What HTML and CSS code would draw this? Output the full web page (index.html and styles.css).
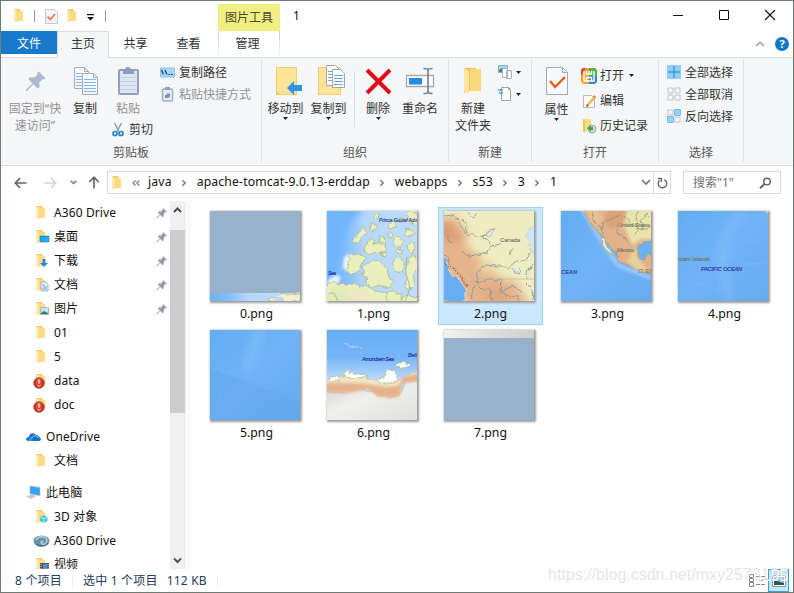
FILE: index.html
```html
<!DOCTYPE html>
<html lang="zh-CN">
<head>
<meta charset="utf-8">
<title>1</title>
<link rel="stylesheet" href="styles.css">
</head>
<body>
<svg class="defs" aria-hidden="true">
  <defs>
    <linearGradient id="sky" x1="0" x2="1" y1="0" y2="1"><stop offset="0" stop-color="#0fa0f5"/><stop offset="1" stop-color="#35b6ff"/></linearGradient>
    <linearGradient id="sea" x1="0" x2="1" y1="0" y2="1"><stop offset="0" stop-color="#64adf3"/><stop offset=".5" stop-color="#70b3f7"/><stop offset="1" stop-color="#66abf0"/></linearGradient>
    <linearGradient id="seawest" x1="0" x2="1"><stop offset="0" stop-color="#6cb3f9"/><stop offset=".22" stop-color="#85bffa"/><stop offset=".42" stop-color="#b5d8fb"/><stop offset="1" stop-color="#bfddfc"/></linearGradient>
    <linearGradient id="seasouth" x1="0" x2="0" y1="0" y2="1"><stop offset="0" stop-color="#66adf3"/><stop offset=".3" stop-color="#76b5f7"/><stop offset=".55" stop-color="#b9dbfc"/></linearGradient>
    <linearGradient id="ice" x1="0" x2="1" y1="0" y2="1"><stop offset="0" stop-color="#d0d0ce"/><stop offset=".4" stop-color="#f0f0ee"/><stop offset="1" stop-color="#dcdcda"/></linearGradient>
    <linearGradient id="icebar" x1="0" x2="1"><stop offset="0" stop-color="#f2f2f1"/><stop offset=".5" stop-color="#dededc"/><stop offset="1" stop-color="#cfcfcd"/></linearGradient>
    <filter id="rough" x="-5%" y="-5%" width="110%" height="110%"><feTurbulence type="fractalNoise" baseFrequency=".18" numOctaves="3" seed="4"/><feDisplacementMap in="SourceGraphic" scale="5" xChannelSelector="R" yChannelSelector="G"/></filter>
    <filter id="soft" x="-30%" y="-30%" width="160%" height="160%"><feGaussianBlur stdDeviation="4"/></filter>
    <filter id="soft2" x="-30%" y="-30%" width="160%" height="160%"><feGaussianBlur stdDeviation="1.6"/></filter>
    <symbol id="folder" viewBox="0 0 16 16"><path d="M1 1h6.500v2H10v10H4.500L3 14.500 1 13z" fill="#f3cc68"/><path d="M3.500 3H10v10H3.500z" fill="#fbdc83"/><path d="M1 1l2.500 2v11.500L1 13z" fill="#fdeab3"/></symbol>
    <symbol id="pin" viewBox="0 0 12 12"><path d="M7.800.3l3.900 3.900-.8.7-1-.2-1.700 1.800.2 2.500-1.200 1-2.400-2.400L1 11.600l-.7-.7 4-3.800-2.400-2.400 1-1.200 2.500.2L7.200 2 7 1z"/></symbol>
    <symbol id="caret" viewBox="0 0 5 3"><path d="M0 0h5L2.500 3z"/></symbol>
    <symbol id="crumb" viewBox="0 0 6 8"><path d="M1.300 1.200L4.200 4 1.300 6.800" fill="none" stroke="#777" stroke-width="1.500"/></symbol>
    <symbol id="alert" viewBox="0 0 12 12"><circle cx="6" cy="6" r="5.300" fill="#cf3422" stroke="#aa2c1e" stroke-width=".7"/><path d="M4.500 2.500Q3 6 4.800 9.500M7.500 2.500Q9 6 7.200 9.500" fill="none" stroke="#ec9a86" stroke-width=".6"/><path d="M5.200 2.200h1.600L6.500 7h-1zM5.400 8h1.200v1.600H5.400z" fill="#fff"/></symbol>
  </defs>
</svg>
<div class="window">
  <header class="titlebar">
    <div class="quick">
      <svg class="q-folder" width="16" height="16"><use href="#folder"/></svg>
      <i class="bar"></i>
      <svg class="q-check" width="13" height="15" viewBox="0 0 13 15"><path d="M.5.5h9l3 3v11H.5z" fill="#f4f4f5" stroke="#c4c8cc"/><path d="M2.500 7.500l2.700 3L10 5" fill="none" stroke="#f07850" stroke-width="1.800"/></svg>
      <svg class="q-folder2" width="16" height="16"><use href="#folder"/></svg>
      <svg class="q-more" width="7" height="7" viewBox="0 0 7 7"><path d="M0 0h7v1.300H0zM0 3h7L3.500 6.500z" fill="#111"/></svg>
      <i class="bar"></i>
    </div>
    <div class="tool-tab">图片工具</div>
    <div class="title">1</div>
    <div class="controls">
      <svg width="12" height="12" viewBox="0 0 12 12"><path d="M1 6.500h10" stroke="#111"/></svg>
      <svg width="12" height="12" viewBox="0 0 12 12"><path d="M1.500 1.500h9v9h-9z" fill="none" stroke="#111"/></svg>
      <svg width="12" height="12" viewBox="0 0 12 12"><path d="M1 1l10 10M11 1L1 11" stroke="#111" stroke-width="1.100"/></svg>
    </div>
  </header>
  <nav class="tabs">
    <span class="tab file">文件</span><span class="tab home">主页</span><span class="tab">共享</span><span class="tab">查看</span><span class="tab manage">管理</span>
    <svg class="collapse" width="10" height="6" viewBox="0 0 10 6"><path d="M1 5l4-3.800L9 5" fill="none" stroke="#999" stroke-width="1.300"/></svg>
    <span class="help">?</span>
  </nav>
  <section class="ribbon">
    <div class="group clip">
      <div class="tools">
        <button class="big off pinbtn"><svg width="32" height="32" viewBox="0 0 32 32"><use href="#pin" x="6" y="5" width="21" height="21" fill="#a3b4cd"/></svg><span>固定到“快<br>速访问”</span></button>
        <button class="big"><svg width="32" height="32" viewBox="0 0 32 32"><g fill="#f5f9fd" stroke="#a8aaac"><path d="M5.500 1.500h10l4 4v17h-14z"/><path d="M13.500 7.500h11l4 4v17h-15z"/></g><path d="M7 7.500h6M7 10.500h6M7 13.500h6M7 16.500h6M7 19.500h6M15 13.500h12M15 16.500h12M15 19.500h12M15 22.500h12M15 25.500h12" stroke="#86b4e8"/><path d="M15.500 1.500v4h4M24.500 7.500v4h4" fill="none" stroke="#a8aaac"/></svg><span>复制</span></button>
        <div class="pastecol">
          <button class="big off"><svg width="32" height="32" viewBox="0 0 32 32"><rect x="7" y="4" width="19" height="24" rx="1" fill="#dae5f4" stroke="#8295bd" stroke-width="2"/><path d="M11 4h2c0-4 6-4 6 0h3v4H11z" fill="#7f91af"/><path d="M8 11.500h17M8 15.500h17M8 19.500h17M8 23.500h17" stroke="#bfcfe6"/></svg><span>粘贴</span></button>
          <button class="row"><svg width="12" height="15" viewBox="0 0 12 15"><path d="M2.500 1l4.500 8.500M9.500 1L5 9.500" stroke="#8c9aa5" stroke-width="1.400"/><g fill="none" stroke="#2586cb" stroke-width="1.700"><circle cx="3" cy="11.500" r="2"/><circle cx="9" cy="11.500" r="2"/></g></svg>剪切</button>
        </div>
        <div class="rows first">
          <button class="row"><svg width="15" height="11" viewBox="0 0 15 11"><path d="M.5 1h14v9H.5z" fill="#a7dafa" stroke="#8ac3e8"/><path d="M1.500 3l2 4.500M5 3l2 4.500M8.500 7.500h1.700M11 7.500h1.700" stroke="#173b5c" stroke-width="1.200"/></svg>复制路径</button>
          <button class="row off"><svg width="15" height="15" viewBox="0 0 15 15"><rect x="2.500" y="2" width="10" height="12" rx="1" fill="#e5edf9" stroke="#92a5c6" stroke-width="1.500"/><path d="M5 0h5v3H5z" fill="#7f91af"/><path d="M5 11V8h2L6 6.500h4v4L8.700 9.300V11z" fill="#647fa9"/></svg>粘贴快捷方式</button>
        </div>
      </div>
      <div class="caption">剪贴板</div>
    </div>
    <div class="group org">
      <div class="tools">
        <button class="big"><svg width="32" height="32" viewBox="0 0 32 32"><path d="M6.500 1.500h20v27h-20z" fill="#ffe397" stroke="#ebce71"/><path d="M6 25l4 4H6z" fill="#ecc659"/><path d="M17 22l7-7v4h8v6h-8v4z" fill="#2d93e6"/></svg><span>移动到</span><svg class="caret" width="5" height="3"><use href="#caret"/></svg></button>
        <button class="big"><svg width="32" height="32" viewBox="0 0 32 32"><path d="M5.500 1.500h22v27h-22z" fill="#ffe397" stroke="#ebce71"/><path d="M13.500-.5h9l3 3v17h-12z" fill="#fff" stroke="#a2a7ac"/><path d="M19.500 3.500h8l4 4v14h-12z" fill="#fff" stroke="#a2a7ac"/><path d="M21 9.500h9M21 12.500h9M21 15.500h9M21 18.500h9M15 5.500h4M15 8.500h4M15 11.500h4M15 14.500h4" stroke="#72a4de"/></svg><span>复制到</span><svg class="caret" width="5" height="3"><use href="#caret"/></svg></button>
        <i class="rule"></i>
        <button class="big del"><svg width="32" height="32" viewBox="0 0 32 32"><path d="M5 4l23 23M28 4L5 27" stroke="#e00d16" stroke-width="4"/></svg><span>删除</span><svg class="caret" width="5" height="3"><use href="#caret"/></svg></button>
        <button class="big ren"><svg width="32" height="32" viewBox="0 0 32 32"><path d="M2.500 9.500h27v11h-27z" fill="#fff" stroke="#a6aaad" stroke-width="1.300"/><path d="M5 12h13v6.500H5z" fill="#238ce2"/><path d="M19.500 2.500c3 0 4.500 0 4.500 2 0-2 2-2 4.500-2M24 4v23M19.500 27.500c3 0 4.500 0 4.500-2 0 2 2 2 4.500 2" fill="none" stroke="#808588" stroke-width="1.700"/></svg><span>重命名</span></button>
      </div>
      <div class="caption">组织</div>
    </div>
    <div class="group new">
      <div class="tools">
        <button class="big"><svg width="32" height="32" viewBox="0 0 32 32"><path d="M7 2h12v3h5v20H12l-5 2z" fill="#edc459"/><path d="M13 3h11v22H13z" fill="#f8da7c"/><path d="M7 2l5 3v23l-5-3z" fill="#ffe5a0"/></svg><span>新建<br>文件夹</span></button>
        <div class="rows icons">
          <button class="row"><svg width="15" height="15" viewBox="0 0 15 15"><path d="M.5.500h9v7h-9z" fill="#a9d6f5" stroke="#8eaec4"/><path d="M1 5l3-2 5 3v1H1z" fill="#48815e"/><path d="M4.500 3.500h5v9h-5zM8.500 5.500h5v8h-5z" fill="#fff" stroke="#a9b4bd"/></svg><svg class="caret" width="5" height="3"><use href="#caret"/></svg></button>
          <button class="row"><svg width="15" height="15" viewBox="0 0 15 15"><path d="M3.500.5h7l2 2v11h-9z" fill="#fff" stroke="#9ba0a4"/><path d="M0 3h5M1 6h4" stroke="#4a9be0" stroke-width="1.500"/><path d="M10.500.500v2h2" fill="none" stroke="#9ba0a4"/></svg><svg class="caret" width="5" height="3"><use href="#caret"/></svg></button>
        </div>
      </div>
      <div class="caption">新建</div>
    </div>
    <div class="group open">
      <div class="tools">
        <button class="big"><svg width="32" height="32" viewBox="0 0 32 32"><path d="M5.500 1.500h16l5 5v22h-21z" fill="#f8f9fc" stroke="#a4a8ac"/><path d="M21.500 1.500v5h5" fill="none" stroke="#a4a8ac"/><path d="M9 15l5 6 10-10" fill="none" stroke="#ef5b20" stroke-width="2.400"/></svg><span>属性</span><svg class="caret" width="5" height="3"><use href="#caret"/></svg></button>
        <div class="rows three">
          <button class="row"><svg width="16" height="16" viewBox="0 0 16 16"><path d="M0 2l2-2h6v16H2l-2-2z" fill="#f1a32a"/><path d="M8 0h6l2 2v6H8z" fill="#53b348"/><path d="M0 2l2-2h3L0 8z" fill="#dd4239"/><path d="M8 8h8v6l-2 2H8z" fill="#318ad0"/><path d="M3 3v10h10V3M5.500 3v3h5V3M8 3v3M5.500 13V9.500h5V13" fill="none" stroke="#fff" stroke-width="1.400"/></svg>打开<svg class="caret" width="5" height="3"><use href="#caret"/></svg></button>
          <button class="row"><svg width="16" height="16" viewBox="0 0 16 16"><path d="M2.500 2.500h8l3 3v9h-11z" fill="#fafafa" stroke="#b9bcbe"/><path d="M5 14l1-3 7-8 2 2-7 7z" fill="#f0b748"/><path d="M5 14l1-3 2 2z" fill="#795b4f"/><path d="M12 4l1-2 2 2-1 1z" fill="#d97972"/></svg>编辑</button>
          <button class="row"><svg width="16" height="16" viewBox="0 0 16 16"><path d="M2 1h8v12H4l-2 1z" fill="#fbdc86"/><path d="M2 1l2 2v12l-2-2z" fill="#eec25a"/><circle cx="11" cy="11" r="4" fill="#d5d9dc" stroke="#a2aaaf"/><path d="M6 10l4-3v2h2v3h-2v2z" fill="#43a64a"/></svg>历史记录</button>
        </div>
      </div>
      <div class="caption">打开</div>
    </div>
    <div class="group select">
      <div class="tools">
        <div class="rows">
          <button class="row"><svg width="14" height="14" viewBox="0 0 14 14"><path d="M0 0h14v14H0z" fill="#8fcef9"/><path d="M7 1v12M1 7h12" stroke="#3e98dc" stroke-width="1.300"/></svg>全部选择</button>
          <button class="row"><svg width="14" height="14" viewBox="0 0 14 14"><path d="M1 1h5v5H1zM8 1h5v5H8zM1 8h5v5H1zM8 8h5v5H8z" fill="#f7f7f7" stroke="#c2c5c7"/></svg>全部取消</button>
          <button class="row"><svg width="14" height="14" viewBox="0 0 14 14"><path d="M1 1h5v5H1zM8 8h5v5H8z" fill="#f7f7f7" stroke="#c2c5c7"/><path d="M7.500.500h6v6h-6zM.5 7.500h6v6h-6z" fill="#99d2fb" stroke="#77bcee"/></svg>反向选择</button>
        </div>
      </div>
      <div class="caption">选择</div>
    </div>
  </section>
  <div class="navigation">
    <svg class="arrow back" width="13" height="12" viewBox="0 0 13 12"><path d="M12.500 6H1.500M6 1.200L1.300 6 6 10.800" fill="none" stroke="#666" stroke-width="1.700"/></svg>
    <svg class="arrow forward" width="13" height="12" viewBox="0 0 13 12"><path d="M.5 6h11M7 1.200L11.700 6 7 10.800" fill="none" stroke="#d5d5d5" stroke-width="1.700"/></svg>
    <svg class="arrow recent" width="7" height="5" viewBox="0 0 7 5"><path d="M.7.800l2.800 2.800L6.300.8" fill="none" stroke="#777" stroke-width="1.400"/></svg>
    <svg class="arrow up" width="12" height="13" viewBox="0 0 12 13"><path d="M6 12.500v-11M1.200 6L6 1.300 10.800 6" fill="none" stroke="#666" stroke-width="1.700"/></svg>
    <div class="address">
      <svg class="addr-folder" width="16" height="16"><use href="#folder"/></svg>
      <svg class="dbl" width="8" height="6" viewBox="0 0 8 6"><path d="M3.500.500L1 3l2.500 2.500M7.300.500L4.800 3l2.500 2.500" fill="none" stroke="#777" stroke-width="1.200"/></svg>
      <span>java</span><svg class="sep" width="6" height="8"><use href="#crumb"/></svg><span>apache-tomcat-9.0.13-erddap</span><svg class="sep" width="6" height="8"><use href="#crumb"/></svg><span>webapps</span><svg class="sep" width="6" height="8"><use href="#crumb"/></svg><span>s53</span><svg class="sep" width="6" height="8"><use href="#crumb"/></svg><span>3</span><svg class="sep" width="6" height="8"><use href="#crumb"/></svg><span>1</span>
      <svg class="drop" width="10" height="7" viewBox="0 0 10 7"><path d="M1 1l4 4 4-4" fill="none" stroke="#707070" stroke-width="1.600"/></svg>
      <div class="refresh"><svg width="11" height="12" viewBox="0 0 11 12"><path d="M7.200 2.600A4.300 4.300 0 1 1 2.600 3.300M.8 1.500h3.600v3.800" fill="none" stroke="#6c6c6c" stroke-width="1.500"/></svg></div>
    </div>
    <div class="search"><span>搜索"1"</span><svg width="13" height="12" viewBox="0 0 13 12"><circle cx="8" cy="4.500" r="3.300" fill="none" stroke="#666" stroke-width="1.500"/><path d="M5.500 7L1 11.300" stroke="#666" stroke-width="2"/></svg></div>
  </div>
  <main class="body">
    <aside class="tree">
      <div class="item"><svg class="ico" viewBox="0 0 16 16"><use href="#folder"/></svg><span>A360 Drive</span><svg class="pin"><use href="#pin"/></svg></div>
      <div class="item"><svg class="ico" viewBox="0 0 16 16"><use href="#folder"/><path d="M5 7h9v6H5z" fill="url(#sky)" stroke="#1378bd" stroke-width=".6"/></svg><span>桌面</span><svg class="pin"><use href="#pin"/></svg></div>
      <div class="item"><svg class="ico" viewBox="0 0 16 16"><use href="#folder"/><path d="M7.500 6h3v4H13l-4 4-4-4h2.500z" fill="#278bd6"/></svg><span>下载</span><svg class="pin"><use href="#pin"/></svg></div>
      <div class="item"><svg class="ico" viewBox="0 0 16 16"><use href="#folder"/><path d="M6 5h5l2 2v7H6z" fill="#f1f5f8" stroke="#a5b1b9"/><path d="M7 8h3M8 10h4M7 12h5" stroke="#61a4d5"/></svg><span>文档</span><svg class="pin"><use href="#pin"/></svg></div>
      <div class="item"><svg class="ico" viewBox="0 0 16 16"><use href="#folder"/><path d="M5.500 6.500h8v7h-8z" fill="#c5e5fa" stroke="#a7b4ba"/><path d="M6 12l3-2 4 2v1H6z" fill="#3f7b72"/></svg><span>图片</span><svg class="pin"><use href="#pin"/></svg></div>
      <div class="item"><svg class="ico" viewBox="0 0 16 16"><use href="#folder"/></svg><span>01</span></div>
      <div class="item"><svg class="ico" viewBox="0 0 16 16"><use href="#folder"/></svg><span>5</span></div>
      <div class="item"><svg class="ico" viewBox="0 0 16 16"><use href="#folder"/><use href="#alert" x="-2" y="4" width="12" height="12"/></svg><span>data</span></div>
      <div class="item"><svg class="ico" viewBox="0 0 16 16"><use href="#folder"/><use href="#alert" x="-2" y="4" width="12" height="12"/></svg><span>doc</span></div>
      <div class="item root"><svg class="ico" viewBox="0 0 16 16"><path d="M3 12C-1 12-.5 8 3 8c0-4 5-5 7-2 2-.5 3 1 3 2 3 1 2 4 0 4z" fill="#0c75cc"/><path d="M5 12c-2-1-1-3 1-3 1-3 5-3 6 0" fill="none" stroke="#fff" stroke-width=".6"/></svg><span>OneDrive</span></div>
      <div class="item"><svg class="ico" viewBox="0 0 16 16"><use href="#folder"/></svg><span>文档</span></div>
      <div class="item root"><svg class="ico" viewBox="0 0 16 16"><path d="M4 1l10 1.500v8L4 9z" fill="#34a4ee" stroke="#a7b9c6" stroke-width=".7"/><path d="M0 11.500l6-2 5 1.500-6 3z" fill="#c5cacd"/></svg><span>此电脑</span></div>
      <div class="item"><svg class="ico" viewBox="0 0 16 16"><use href="#folder"/><path d="M5 8l4-2 3.500 2v4L9 14l-4-2z" fill="#42c5de"/><path d="M5 8l4 1.500L12.500 8M9 9.500V14" fill="none" stroke="#b7edf6"/></svg><span>3D 对象</span></div>
      <div class="item"><svg class="ico" viewBox="0 0 16 16"><ellipse cx="6.500" cy="8" rx="8" ry="5.500" fill="#6a93a8"/><path d="M1 7c3-5 11-4 11 1 0 4-6 4-6 1.500 0-1 1.500-1.500 2.500-.5" fill="none" stroke="#b5ced9" stroke-width="1.400"/><path d="M1 11c3 3 9 3 12-1" fill="none" stroke="#3f6a80" stroke-width="1.200"/></svg><span>A360 Drive</span></div>
      <div class="item"><svg class="ico" viewBox="0 0 16 16"><use href="#folder"/><path d="M5 6h9v9H5z" fill="#4c5460"/><path d="M8 7h4v7H8z" fill="#568fc1"/><path d="M6 7v8M13 7v8" stroke="#d5d8dd" stroke-dasharray="1 1"/></svg><span>视频</span></div>
    </aside>
    <div class="scrollbar">
      <svg width="16" height="29" viewBox="0 0 16 29"><path d="M4 11L7.500 7.500 11 11" fill="none" stroke="#505050" stroke-width="2"/></svg>
      <div class="thumb"></div>
      <svg class="down" width="16" height="17" viewBox="0 0 16 17"><path d="M4 6.500L7.500 10 11 6.500" fill="none" stroke="#505050" stroke-width="2"/></svg>
    </div>
    <section class="files">
      <figure><svg class="map" viewBox="0 0 90 90"><path d="M0 0h90v90H0z" fill="#99b2cc"/><path d="M0 82h90v8H0z" fill="url(#seawest)"/><g filter="url(#rough)"><path d="M59 88l5-2 3 5h-8zM70 82l5 2 5-1 10-1v11l-7-3-7 2-4-5-5-2z" fill="#f0efd0" stroke="#b8b58c" stroke-width=".7"/></g></svg><figcaption>0.png</figcaption></figure>
      <figure><svg class="map" viewBox="0 0 90 90"><path d="M0 0h90v90H0z" fill="url(#seawest)"/><path d="M-5-5h45Q17 12 14 36T-5 68z" fill="#6fb6fb" filter="url(#soft)"/><path d="M17 46l5-3 4 11-5 7-5-4zM1 69l7-5 6 2-4 9H0z" fill="#edf5ff" filter="url(#soft2)"/><g filter="url(#rough)" fill="#e9efbd" stroke="#b3b17c" stroke-width=".7"><path d="M-3 78l7-7 8 2 8 1 6-3 7 5 7-1 8 5 10 1 7 5 9 1 7-3 13 3v10H-5z"/><path d="M22 45l10-2 7 4-5 6-2 6-8 5-4-4 2-8zM35 56l6-4 11-3 8 10 2 7 5 5-5 6-10-2-6 2-9-7 4-2-6-5 3-2z"/><path d="M26 28l5-6 7-5 2 5-5 5-3 4-6 0zM37 36l4-5 2-4 5 2-1 4 8-2 4 6-4 5-5-1-6 2-6-2zM52 25l5 1 1 6-4 2-2-4zM68 47l6-1 2 7-2 9-6-2-2-7zM82 46l6-2 4 10-5 8v12l-5 5-5-3 3-10-2-7zM67 27l5-2 4 6-3 6-6-2zM80 34l5-3 3 5-2 7-5-3zM43 14l5-2 3 5-7 3zM47 3l6 0-1 5-5-1zM62 13l5-3 3 5-7 3zM80 3l5-3 8 7-3 8-8-5zM61 22l3-1 1 4-4 1zM78 17l8 2 3 5-7 2-4-4zM53 42l6 1-2 3zM60 81l6-1 8 4v8H60zM70 38l6 1-2 4-5-2zM72 6l4 1-1 5-4-2z"/></g><path d="M-3 92V84l14-8 16 3 12 8v5z" fill="#d9eab0" opacity=".5" filter="url(#soft2)"/><path d="M18 82l18-5 8 10-12 6z" fill="#f3e6c6" opacity=".8" filter="url(#soft2)"/><path d="M2 83q4-3 6 1t3 6M80 46q-3 15 1 23t-3 21" fill="none" stroke="#7fa9a6" stroke-width=".7"/><g class="sea-label"><text x="52" y="11" textLength="38" lengthAdjust="spacingAndGlyphs">Prince Gustaf Ado</text><text x="1" y="64" textLength="8">Sea</text></g></svg><figcaption>1.png</figcaption></figure>
      <figure class="selected"><svg class="map" viewBox="0 0 90 90"><path d="M0 0h90v90H0z" fill="#f0ecc1"/><g filter="url(#soft)"><path d="M-8 8l20-2 12 16-2 14 14 8 4 14 18 10 14 2 14 26H24L-8 45z" fill="#e6b48c"/><path d="M-8 8l14 2 12 18-8 4L-8 24z" fill="#dc9d76"/><path d="M42 76l14-2 10 20H42z" fill="#e0a880"/><path d="M34 50l14 0 6 14-18-1z" fill="#ecd0a0"/></g><g filter="url(#rough)"><path d="M-5 40l7 8 3 12 11 10 6 8-1 5v8H-6z" fill="#68aef4" stroke="#e8d7be"/><path d="M94 15l-8 1-4 7 3 9 3 9 6 4z" fill="#cfe5fc" stroke="#c5c9a5" stroke-width=".7"/><path d="M1 44l6 11 8 8 8 12M0 50l6 8" stroke="#937e70" fill="none" stroke-width="1.300" stroke-dasharray="2 1"/><path d="M24 2l4 5 5-4M38 25l5-2 2-4 6-1-4 5-1 3-5-2zM69 56l3 7 4 1-1-8M66 41l2-3-2 6" fill="#deecf1" stroke="#8c8870" stroke-width=".6"/></g><g filter="url(#rough)" fill="none" stroke="#7f9c97" stroke-width=".85"><path d="M0 5l9-1 6 6 3 7 5 8 4-2 10 3 7 3 4 6 8-2M47 35l-3 6-9 2-4 1-6 2-9-6M35 59l7-5 9 1 6 0 7 3 8-7 11-2 3-7M35 59l-2 6 1 9 4 4 8 0 1 6 2 7M30 71l6 0 9-2 12 0M57 69l-1 12 7 3 10 1 4 7M57 80l12-5 11 7M90 54l-8 6 1 9M80 71l8 8 1 11M20 8l4 14M0 22l8 10M30 74l-3 14"/></g><path d="M33 68h57" stroke="#b9bca4" stroke-width=".7"/><g class="land-label"><text x="56" y="31" textLength="20">Canada</text></g></svg><figcaption>2.png</figcaption></figure>
      <figure><svg class="map" viewBox="0 0 90 90"><path d="M0 0h90v90H0z" fill="url(#sea)"/><path d="M20-4l20 33 17 25 33 13" fill="none" stroke="#9ccaff" stroke-width="4" filter="url(#soft2)"/><g filter="url(#rough)"><path d="M21-4h73v33l-13 2-5 5 1 8 4 6 4-2 1-5 7 1v19l-12-2-9-5-13-5-6-12-8-9-5-7-4-3-9-10z" fill="#e3b28b" stroke="#a59a7d" stroke-width=".7"/><path d="M39 25l4 3 3 8 6 5 1 3-7-4-4-6z" fill="#ece6c0" stroke="#a99e80" stroke-width=".7"/></g><g filter="url(#soft2)"><path d="M62-3h30v31H80l-8 6-8-16z" fill="#e9e4ac"/><path d="M47-3h19l-2 13-14 8-8-9z" fill="#dda27a"/><path d="M25-2h12l6 9-7 9z" fill="#e7c193"/><path d="M74 37l4 12 10 12-14-3-8-8z" fill="#e6d19c"/></g><g fill="none" stroke="#7f8f85" stroke-width=".7" filter="url(#rough)"><path d="M30-2l4 15 9 5M41 13l17-9M41 13l1 10M56 14v9l8 3 4 8M64 6l6 8 8 4 12-2M74 24l3-8-3-9 3-8M88 4l-8 4 2 8"/></g><g class="land-label"><text x="57" y="16" textLength="32">United States</text><text x="56" y="41" textLength="17">Mexico</text><text x="78" y="62" textLength="12">□ El</text></g><g class="sea-label"><text x="0" y="63" textLength="16">CEAN</text></g></svg><figcaption>3.png</figcaption></figure>
      <figure><svg class="map" viewBox="0 0 90 90"><path d="M0 0h90v90H0z" fill="url(#sea)"/><path d="M64 0L46 29l-2 25 7 36" fill="none" stroke="#8fc4fc" stroke-width="9" opacity=".5" filter="url(#soft)"/><path d="M12 72l13 2 19 5M38 45l19 3 14 6 16-2M6 8l9 5M63 27l20 7" fill="none" stroke="#8bc3fc" stroke-width=".6" opacity=".6" filter="url(#rough)"/><path d="M87 0h3v3z" fill="#d5d1a6"/><g class="land-label"><text x="0" y="50" textLength="32">tcairn Islands</text></g><g class="sea-label"><text x="23" y="60" textLength="41">PACIFIC OCEAN</text></g></svg><figcaption>4.png</figcaption></figure>
      <figure><svg class="map" viewBox="0 0 90 90"><path d="M0 0h90v90H0z" fill="url(#sea)"/><path d="M51-3L36 42" stroke="#8cc2fb" stroke-width="11" opacity=".55" filter="url(#soft)"/><path d="M-5 37l64 22 33 12v21H-5z" fill="#62a6e9" opacity=".45" filter="url(#soft2)"/><path d="M3 38l31 10 27 12M12 60l-3 5" fill="none" stroke="#80b9ef" stroke-width=".8" opacity=".6" filter="url(#rough)"/></svg><figcaption>5.png</figcaption></figure>
      <figure><svg class="map" viewBox="0 0 90 90"><path d="M0 0h90v90H0z" fill="url(#seasouth)"/><path d="M-5 56h30l15 6 35 1 5-12h15v45H-5z" fill="url(#ice)"/><g filter="url(#rough)"><path d="M-4 48l8 1 12-2 12-2 10 2 9 4 10 3 14-2 9-7 15-5v11l-20 1-3 14-9 1-16-3-7-5-20 2-10 1-14-2z" fill="#f0e6c8" stroke="#d0c98e" stroke-width=".7"/></g><g filter="url(#soft2)"><path d="M-4 53l28 0 15 1 20 3 12-1 5-9 18-4v8l-19 2-2 12-9 3-14-2-9-7-22 4-23-1z" fill="#e5b28d"/></g><g filter="url(#rough)" fill="#fcfdfd" stroke="#bab67c" stroke-width=".7"><path d="M16 43l4-3 4 4 10 0 6 2-7 2-16-1zM49 51l8-4 3-8 8 2 3 9-4 3-17 0zM69 34l8-2 8 3-7 3-9-1zM2 48l9-1 2 3-10 1z"/></g><path d="M17 13l8 4 5-1 7 4" fill="none" stroke="#aad3fc" filter="url(#rough)"/><g class="sea-label"><text x="35" y="31" textLength="32">Amundsen Sea</text><text x="81" y="27" textLength="9">Bell</text></g></svg><figcaption>6.png</figcaption></figure>
      <figure><svg class="map" viewBox="0 0 90 90"><path d="M0 0h90v90H0z" fill="#99b2cc"/><path d="M0 0h90v8H0z" fill="url(#icebar)"/></svg><figcaption>7.png</figcaption></figure>
    </section>
  </main>
  <footer class="status"><span>8 个项目</span><i></i><span class="chosen">选中 1 个项目</span><span class="size">112 KB</span><i></i>
    <div class="views"><svg width="17" height="13" viewBox="0 0 17 13"><path d="M.5.500h4v3h-4zM.5 4.500h4v3h-4zM.5 8.500h4v4h-4zM7 2.500h4M12 2.500h4M7 6.500h4M12 6.500h4M7 10.500h4M12 10.500h4" fill="none" stroke="#85868c"/></svg><div class="large"><svg width="14" height="12" viewBox="0 0 14 12"><path d="M.5.500h13v11H.5z" fill="#fff" stroke="#85999f"/><path d="M2 2h10v8H2z" fill="#9bc9ed"/><path d="M2 5l6 2 4 1v2H2z" fill="#31554d"/></svg></div></div>
  </footer>
  <div class="watermark">https://blog.csdn.net/mxy2573195</div>
</div>
</body>
</html>
```
FILE: styles.css
```css
* { box-sizing: border-box; }
body { margin: 0; font: 12px/17px "Noto Sans", "Noto Sans CJK SC", sans-serif; color: #111; }
svg { display: block; flex: none; overflow: visible; }
button { border: 0; background: none; padding: 0; margin: 0; font: inherit; color: #333; white-space: nowrap; }
.defs { position: absolute; width: 0; height: 0; }
.window { position: relative; width: 794px; height: 593px; border: 1px solid #6e7c74; background: #fff; overflow: hidden; display: flex; flex-direction: column; }
.titlebar { height: 30px; flex: none; display: flex; }
.quick { width: 217px; display: flex; align-items: center; padding-left: 12px; }
.bar { width: 1px; height: 12px; background: #999; }
.q-folder { margin-right: 5px; }
.q-check { margin-left: 10px; }
.q-folder2 { margin-left: 8px; }
.q-more { margin: 3px 11px 0 5px; }
.tool-tab { width: 62px; height: 27px; margin-top: 3px; background: #f1ee83; text-align: center; line-height: 27px; color: #494926; }
.title { padding: 6px 0 0 13px; }
.controls { margin-left: auto; display: flex; gap: 34px; padding: 8px 17px 0 0; }
.tabs { height: 27px; flex: none; display: flex; border-bottom: 1px solid #dadbdc; color: #333; }
.tab { width: 53px; text-align: center; line-height: 25px; }
.file { width: 56px; height: 23px; background: #1979ca; color: #fff; }
.home { width: 52px; height: 27px; border: 1px solid #dadbdc; border-bottom: 0; background: #f5f6f7; line-height: 23px; }
.manage { width: 62px; margin-left: 3px; padding-right: 3px; border: 1px solid; border-width: 0 1px; border-image: linear-gradient(#ccc, #fff) 1; }
.collapse { margin: 10px 0 0 auto; }
.help { width: 14px; height: 14px; margin: 6px 4px 0 10px; border-radius: 50%; background: #1177c7; color: #fff; font-size: 11px; font-weight: 700; line-height: 14px; text-align: center; }
.ribbon { height: 108px; flex: none; display: flex; background: #f5f6f7; border-bottom: 1px solid #dadbdc; }
.group { height: 102px; margin-top: 2px; border-right: 1px solid #e1e2e3; display: flex; flex-direction: column; }
.tools { display: flex; height: 85px; }
.caption { text-align: center; color: #555; line-height: 18px; }
.clip { width: 261px; } .org { width: 187px; } .new { width: 83px; } .open { width: 127px; } .select { width: 85px; }
.big { width: 43px; padding-top: 6px; display: flex; flex-direction: column; align-items: center; justify-content: flex-start; }
.big > span { margin-top: 2px; }
.big .caret { margin-top: 0; }
.caret { fill: #222; }
.off { color: #929292; }
.off > svg { opacity: .88; }
.clip .big { width: 32px; }
.clip .pinbtn { width: 68px; }
.pastecol { width: 56px; padding-left: 11px; }
.pastecol .row { height: 18px; gap: 5px; margin-top: 3px; }
.row { height: 22px; display: flex; align-items: center; gap: 4px; }
.rows { padding-top: 1px; }
.first { padding-left: 3px; }
.org .tools { padding-left: 2px; }
.rule { height: 56px; width: 1px; background: #dddedf; margin: 11px 2px 0 4px; }
.org .del { width: 42px; }
.org .ren { width: 42px; }
.new .big { width: 48px; }
.icons { padding-left: 1px; }
.icons .row { gap: 3px; }
.open .big { width: 49px; }
.open .big > span { margin-top: 3px; }
.three { padding-top: 3px; }
.three .row { height: 25px; gap: 3px; }
.three .caret { margin-left: 2px; }
.select .rows { padding-left: 8px; }
.navigation { height: 35px; flex: none; display: flex; align-items: flex-start; padding-top: 5px; }
.arrow { margin-top: 6px; }
.back { margin-left: 13px; } .forward { margin-left: 17px; } .recent { margin: 9px 0 0 13px; } .up { margin: 5px 0 0 11px; }
.address { width: 564px; height: 23px; margin-left: 7px; border: 1px solid #d9d9d9; display: flex; align-items: center; padding-left: 3px; letter-spacing: .16px; }
.dbl { margin: 0 8px 0 5px; }
.address span { line-height: 19px; height: 21px; white-space: nowrap; font-size: 12.2px; }
.sep { margin: 0 9.500px; }
.drop { margin-left: auto; margin-right: 2px; }
.refresh { width: 17px; height: 21px; border-left: 1px solid #d9d9d9; display: flex; align-items: center; justify-content: center; }
.search { width: 98px; height: 23px; margin-left: 12px; border: 1px solid #d9d9d9; display: flex; align-items: center; justify-content: space-between; padding: 0 8px 0 9px; color: #707070; }
.body { height: 368px; flex: none; display: flex; overflow: hidden; }
.tree { width: 169px; overflow: hidden; }
.item { height: 24px; display: flex; align-items: center; padding-left: 34px; }
.item span { white-space: nowrap; line-height: 17px; padding-bottom: 2px; letter-spacing: .1px; }
.ico { width: 16px; height: 16px; margin-right: 3px; }
.pin { width: 11px; height: 11px; margin: 0 3px 0 auto; fill: #929ca6; }
.root { margin-top: 8px; padding-left: 25px; }
.root .ico { margin-right: 4px; }
.scrollbar { width: 16px; background: #f0f0f0; display: flex; flex-direction: column; }
.thumb { width: 15px; height: 183px; background: #cdcdcd; }
.down { margin-top: auto; }
.files { flex: 1; margin-left: 2px; border-left: 1px solid #f2f2f2; padding: 6px 0 0 15px; display: grid; grid-template-columns: repeat(5, 105px); grid-auto-rows: 118px; gap: 1px 12px; align-content: start; }
figure { margin: 0; padding: 3px 0 0 6px; border: 1px solid transparent; border-left: 0; border-right: 0; display: flex; flex-direction: column; }
.selected { background: #cce8ff; border: 1px solid #99d1ff; padding-left: 5px; }
.map { width: 90px; height: 90px; overflow: hidden; box-shadow: 1px 1px 2px 1px #9c9c9c; }
figcaption { text-align: center; line-height: 17px; margin-top: 4px; padding-right: 6px; font-size: 12.3px; }
.selected figcaption { padding-right: 5px; }
.sea-label { font: italic 5.500px "Liberation Sans", sans-serif; fill: #24319b; stroke: #24319b; stroke-width: .15px; }
.land-label { font: 6px "Liberation Sans", sans-serif; fill: #747661; stroke: #747661; stroke-width: .1px; }
.status { height: 23px; flex: none; display: flex; align-items: center; padding-left: 14px; color: #26395c; letter-spacing: .2px; }
.status i { width: 1px; height: 12px; margin: 0 10px; background: #eee; }
.size { margin-left: 9px; }
.views { display: flex; align-items: center; margin: 0 4px 0 auto; gap: 2px; }
.large { width: 21px; height: 23px; border: 1px solid #30a6df; background: #c8e7f6; display: flex; align-items: center; justify-content: center; }
.watermark { position: absolute; left: 547px; top: 564px; font: 16px/20px "Liberation Sans", sans-serif; color: rgba(210,210,210,.6); text-shadow: 1px 1px #fff; white-space: nowrap; }
```
